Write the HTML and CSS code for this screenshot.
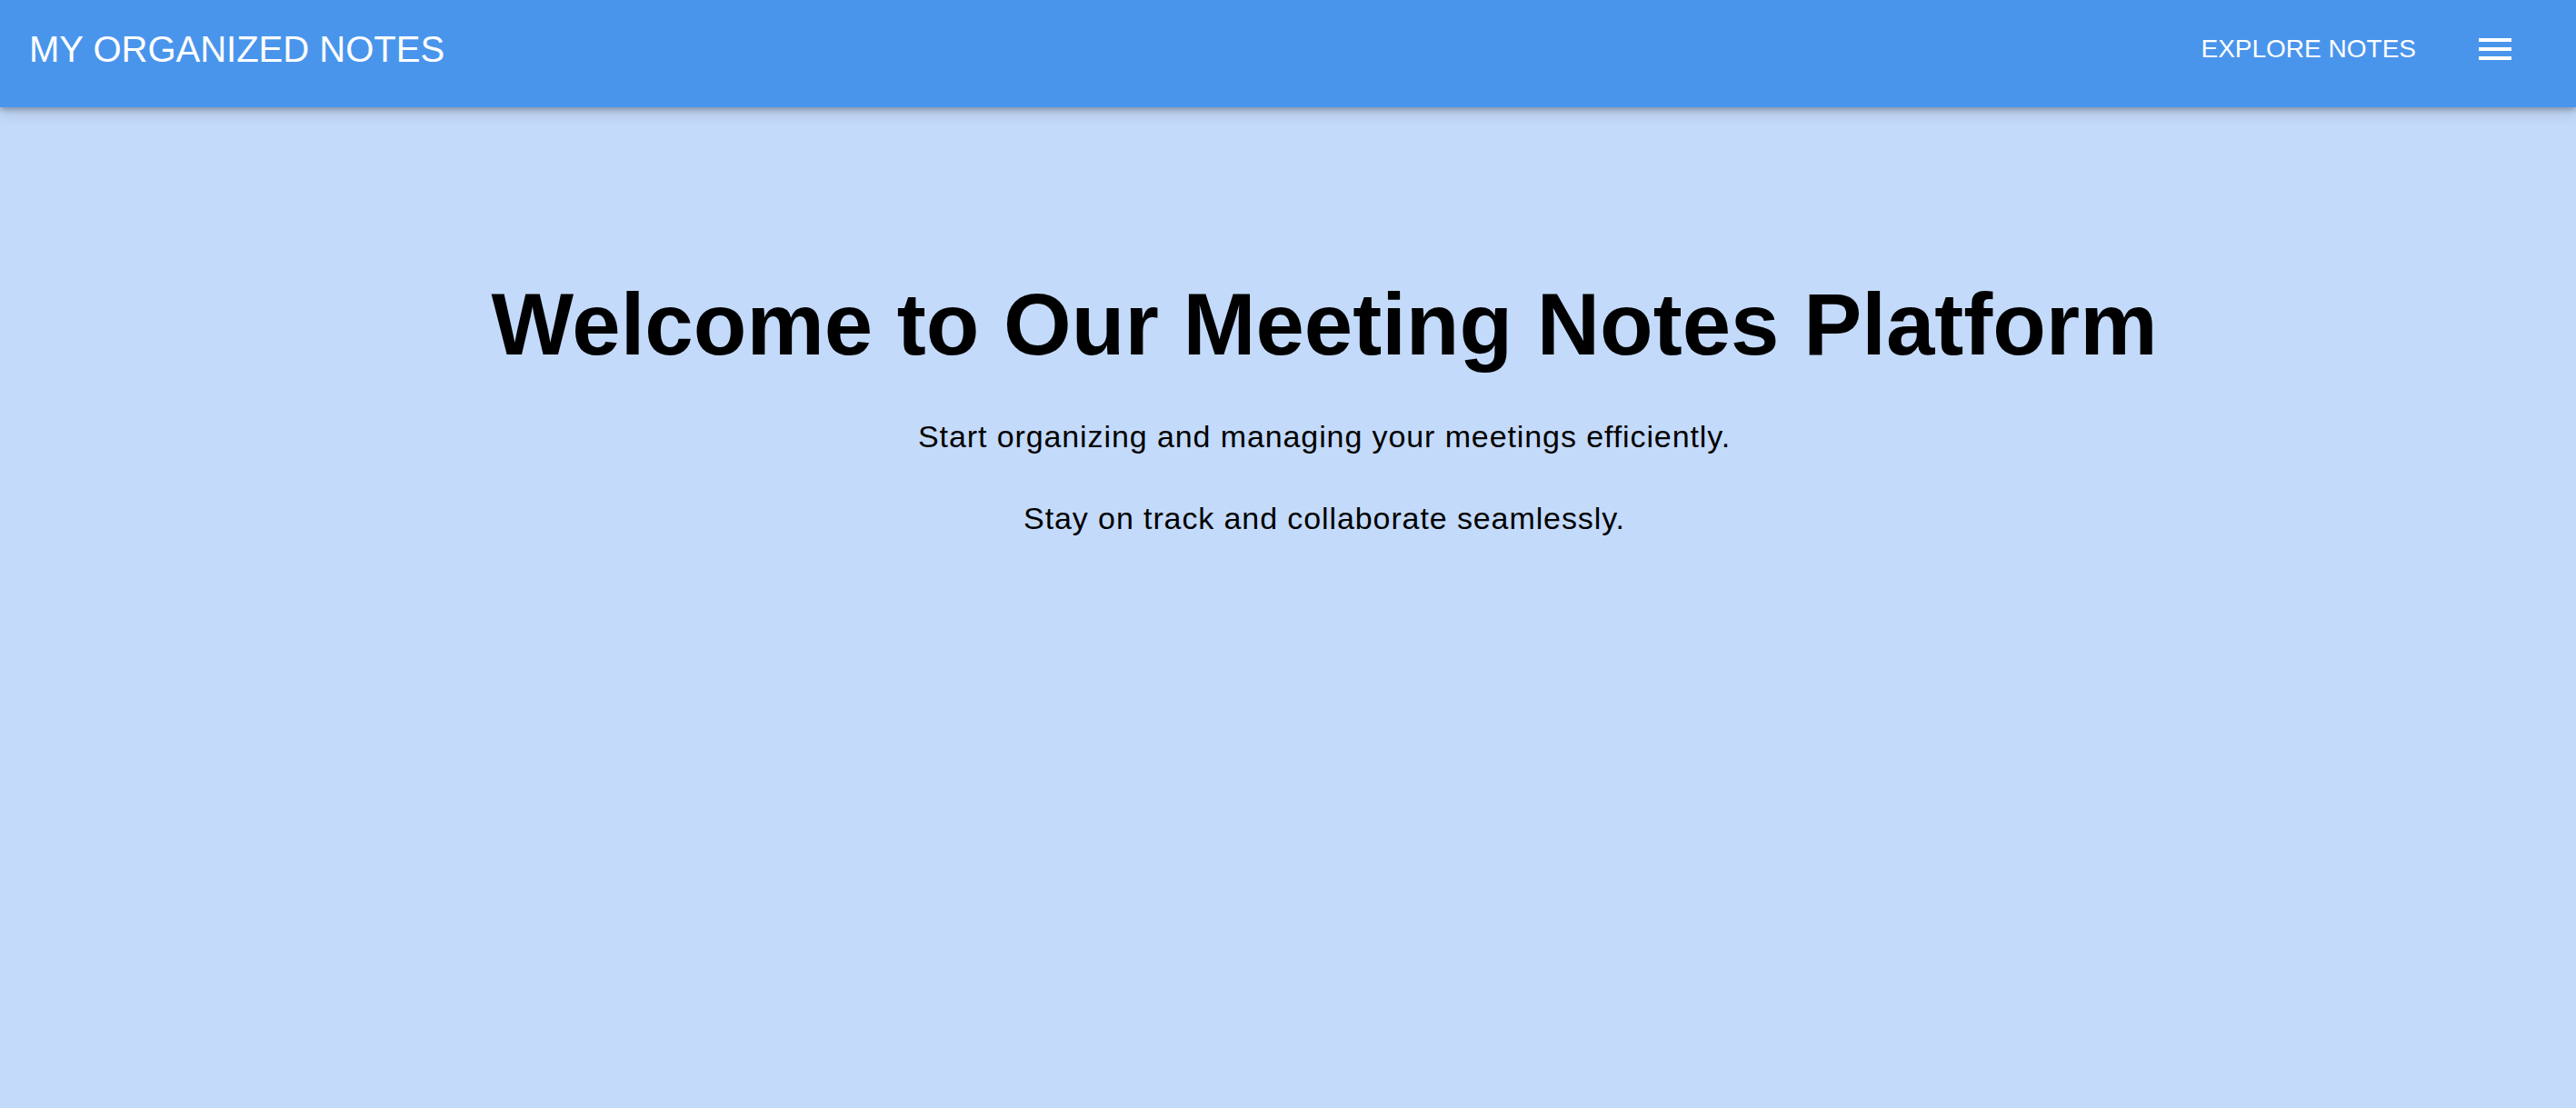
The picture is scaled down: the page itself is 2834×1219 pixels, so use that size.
FILE: index.html
```html
<!DOCTYPE html>
<html lang="en">
<head>
<meta charset="utf-8">
<title>My Organized Notes</title>
<link rel="stylesheet" href="styles.css">
</head>
<body>
<header class="appbar">
  <div class="toolbar">
    <div class="brand">MY ORGANIZED NOTES</div>
    <nav class="nav">
      <a class="nav-link" href="#">EXPLORE NOTES</a>
      <button class="menu-btn" aria-label="menu">
        <svg class="menu-icon" viewBox="0 0 24 24" width="48" height="48"><path fill="#fff" d="M3 18h18v-2H3v2zm0-5h18v-2H3v2zm0-7v2h18V6H3z"/></svg>
      </button>
    </nav>
  </div>
</header>
<main class="hero">
  <h1 class="hero-title">Welcome to Our Meeting Notes Platform</h1>
  <p class="hero-text">Start organizing and managing your meetings efficiently.</p>
  <p class="hero-text">Stay on track and collaborate seamlessly.</p>
</main>
</body>
</html>
```

FILE: styles.css
```css
html, body {
  margin: 0;
  padding: 0;
  height: 100%;
}
body {
  background: #c4dafa;
  font-family: "Liberation Sans", Arial, Helvetica, sans-serif;
  color: #000;
  overflow: hidden;
}
.appbar {
  position: relative;
  z-index: 2;
  height: 118px;
  background: #4a95ec;
  box-shadow: 0 3px 5px rgba(0,0,0,0.22), 0 6px 14px rgba(0,0,0,0.14);
}
.toolbar {
  height: 108px;
  display: flex;
  align-items: center;
  justify-content: space-between;
  padding: 0 65px 0 32px;
}
.brand {
  color: #fff;
  font-size: 40px;
}
.nav {
  display: flex;
  align-items: center;
  gap: 63px;
}
.nav-link {
  color: #fff;
  text-decoration: none;
  font-size: 28px;
}
.menu-btn {
  background: none;
  border: 0;
  padding: 0;
  margin: 0;
  display: flex;
  cursor: pointer;
}
.menu-icon {
  display: block;
}
.hero {
  text-align: center;
  padding: 184px 0 0 80px;
}
.hero-title {
  font-size: 96px;
  font-weight: 700;
  margin: 0 0 49px;
  line-height: 110px;
}
.hero-text {
  font-size: 34px;
  line-height: 39px;
  letter-spacing: 0.9px;
  margin: 0 0 51px;
}
```
